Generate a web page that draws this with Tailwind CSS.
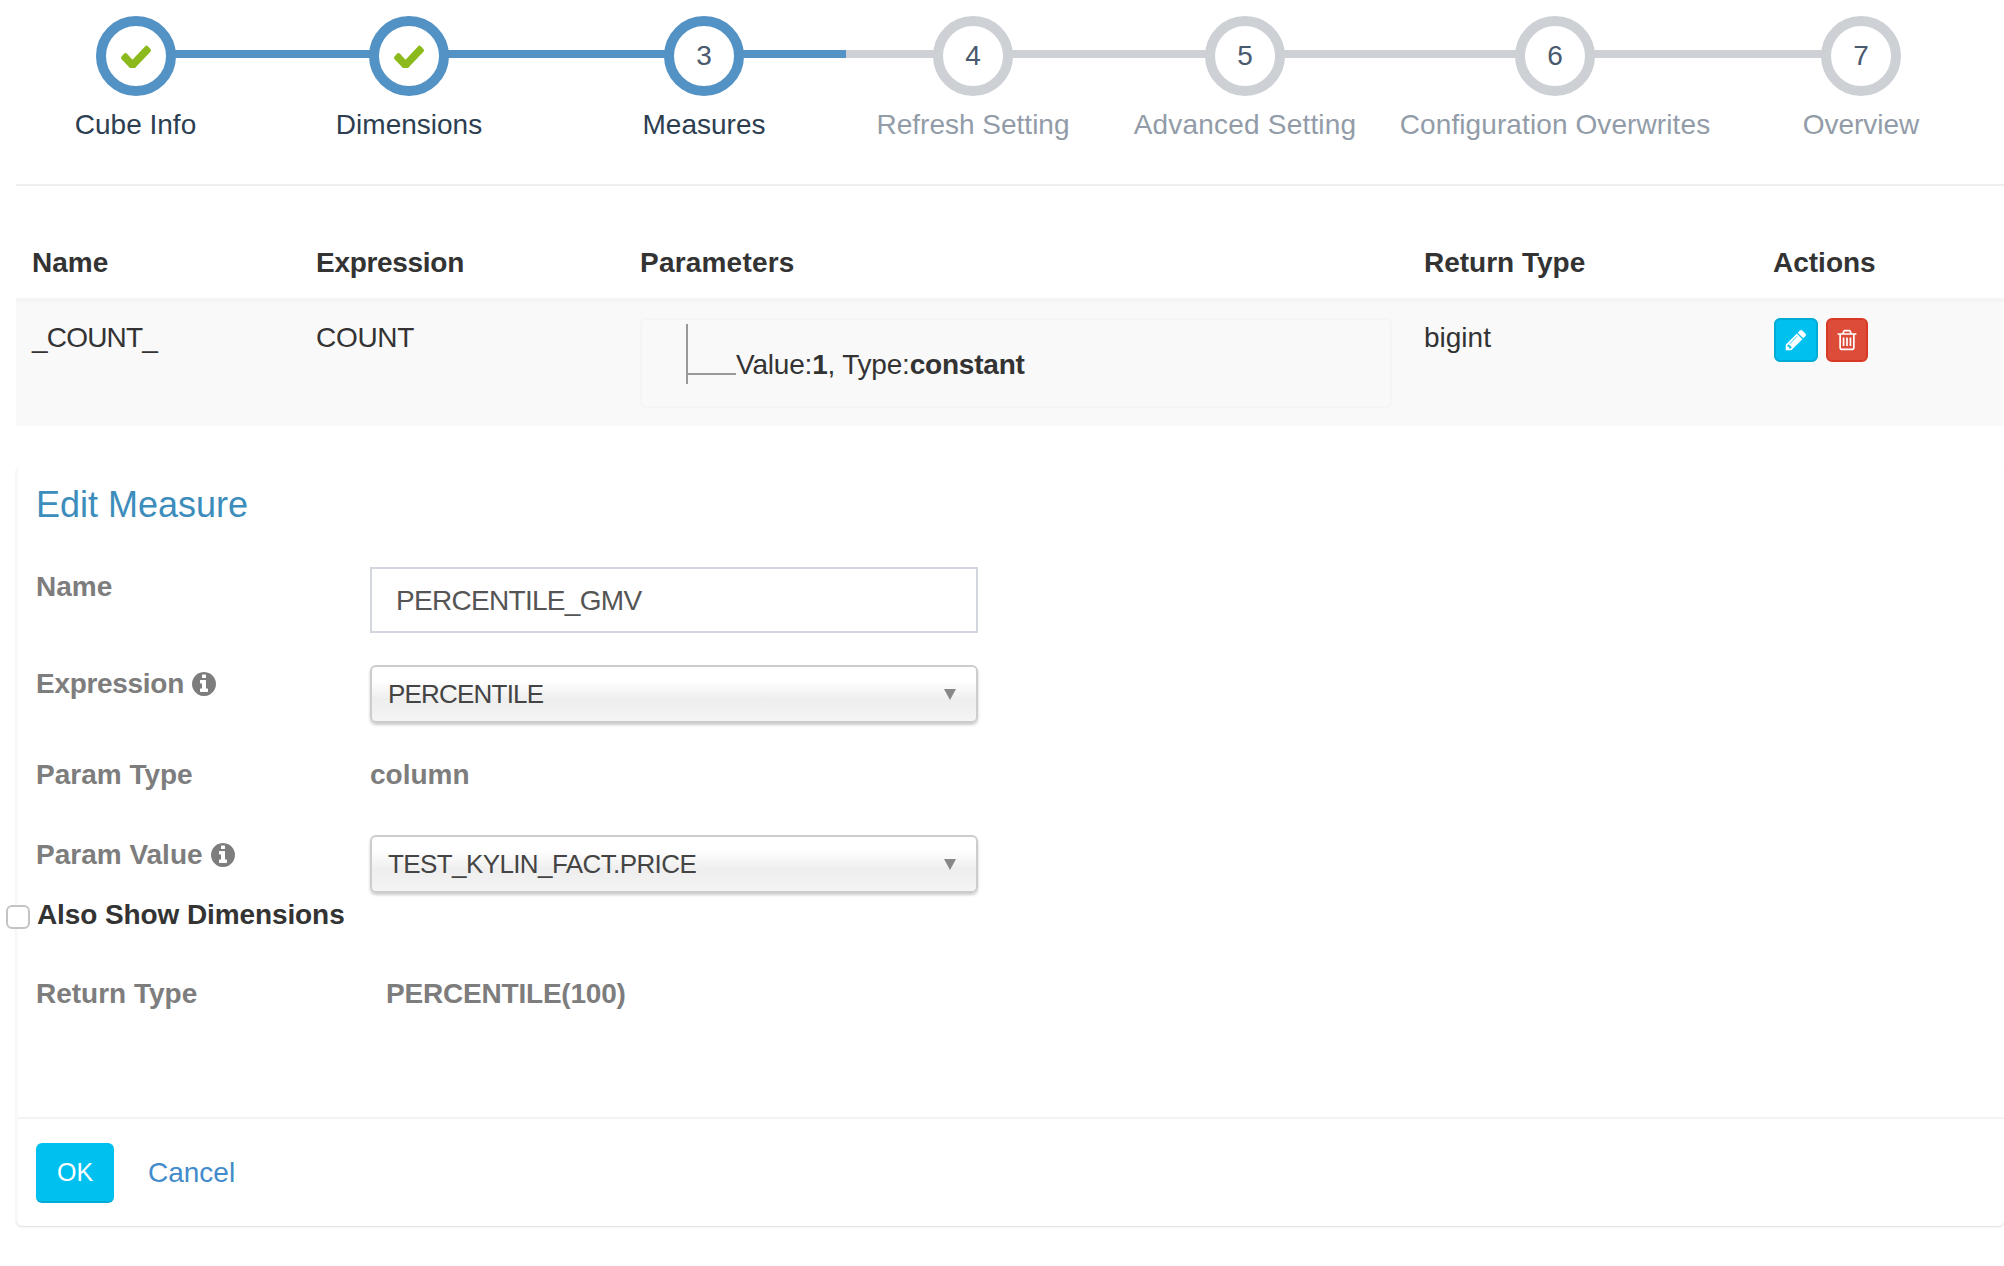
<!doctype html>
<html>
<head>
<meta charset="utf-8">
<script src="https://cdn.jsdelivr.net/npm/@tailwindcss/browser@4"></script>
</head>
<body class="bg-white font-['Liberation_Sans',Arial,sans-serif] text-[28px] leading-[40px] text-[#333] w-[2004px] h-[1266px] overflow-hidden">

<!-- Stepper -->
<div class="relative h-[186px] ml-4 border-b-2 border-[#eeeeee]">
  <div class="absolute left-[119px] top-[50px] w-[1726px] h-2 bg-[#cdd1d6]"></div>
  <div class="absolute left-[119px] top-[50px] w-[711px] h-2 bg-[#5392c4]"></div>
  <div class="relative flex pt-4 -ml-4">
    <div class="w-[271px] flex flex-col items-center text-[#2c3e50]">
      <div class="w-20 h-20 rounded-full border-[10px] border-[#5392c4] bg-white flex items-center justify-center">
        <svg class="w-[30px] h-[23px]" viewBox="121 306 1550 1120" preserveAspectRatio="none"><path fill="#8cb91c" d="M1671 566q0 40-28 68l-724 724-136 136q-28 28-68 28t-68-28l-136-136-362-362q-28-28-28-68t28-68l136-136q28-28 68-28t68 28l294 295 656-657q28-28 68-28t68 28l136 136q28 28 28 68z"/></svg>
      </div>
      <div class="mt-[9px] whitespace-nowrap">Cube Info</div>
    </div>
    <div class="w-[276px] flex flex-col items-center text-[#2c3e50]">
      <div class="w-20 h-20 rounded-full border-[10px] border-[#5392c4] bg-white flex items-center justify-center">
        <svg class="w-[30px] h-[23px]" viewBox="121 306 1550 1120" preserveAspectRatio="none"><path fill="#8cb91c" d="M1671 566q0 40-28 68l-724 724-136 136q-28 28-68 28t-68-28l-136-136-362-362q-28-28-28-68t28-68l136-136q28-28 68-28t68 28l294 295 656-657q28-28 68-28t68 28l136 136q28 28 28 68z"/></svg>
      </div>
      <div class="mt-[9px] whitespace-nowrap">Dimensions</div>
    </div>
    <div class="w-[314px] flex flex-col items-center text-[#2c3e50]">
      <div class="w-20 h-20 rounded-full border-[10px] border-[#5392c4] bg-white flex items-center justify-center text-[#4a5a6e]">3</div>
      <div class="mt-[9px] whitespace-nowrap">Measures</div>
    </div>
    <div class="w-[224px] flex flex-col items-center text-[#929ca8]">
      <div class="w-20 h-20 rounded-full border-[10px] border-[#cdd1d6] bg-white flex items-center justify-center text-[#4a5a6e]">4</div>
      <div class="mt-[9px] whitespace-nowrap">Refresh Setting</div>
    </div>
    <div class="w-[320px] flex flex-col items-center text-[#929ca8]">
      <div class="w-20 h-20 rounded-full border-[10px] border-[#cdd1d6] bg-white flex items-center justify-center text-[#4a5a6e]">5</div>
      <div class="mt-[9px] whitespace-nowrap tracking-[0.2px]">Advanced Setting</div>
    </div>
    <div class="w-[300px] flex flex-col items-center text-[#929ca8]">
      <div class="w-20 h-20 rounded-full border-[10px] border-[#cdd1d6] bg-white flex items-center justify-center text-[#4a5a6e]">6</div>
      <div class="mt-[9px] whitespace-nowrap tracking-[0.1px]">Configuration Overwrites</div>
    </div>
    <div class="w-[312px] flex flex-col items-center text-[#929ca8] -mr-[40px]">
      <div class="w-20 h-20 rounded-full border-[10px] border-[#cdd1d6] bg-white flex items-center justify-center text-[#4a5a6e]">7</div>
      <div class="mt-[9px] whitespace-nowrap">Overview</div>
    </div>
  </div>
</div>

<!-- Measures table -->
<div class="ml-4">
  <div class="grid grid-cols-[284px_324px_784px_349px_1fr] h-[112px] items-start pt-[57px] font-bold text-[#333]">
    <div class="pl-4">Name</div>
    <div class="pl-4 tracking-[-0.3px]">Expression</div>
    <div class="pl-4 tracking-[0.2px]">Parameters</div>
    <div class="pl-4">Return Type</div>
    <div class="pl-4">Actions</div>
  </div>
  <div class="grid grid-cols-[284px_324px_784px_349px_1fr] h-[128px] bg-[#f9f9f9] border-t-4 border-[#f4f4f4] pt-4">
    <div class="pl-4 tracking-[-0.8px]">_COUNT_</div>
    <div class="pl-4 tracking-[-0.3px]">COUNT</div>
    <div class="pl-4 pr-4">
      <div class="h-[90px] rounded-md border-2 border-[#f5f5f5] pt-1 pl-[44px]">
        <div class="flex h-[60px] border-l-2 border-[#999] relative">
          <div class="w-[48px] h-[51px] border-b-2 border-[#999]"></div>
          <div class="mt-[21px] whitespace-nowrap tracking-[-0.2px]">Value:<b>1</b>, Type:<b>constant</b></div>
        </div>
      </div>
    </div>
    <div class="pl-4">bigint</div>
    <div class="pl-[17px] flex gap-2 items-start">
      <div class="w-11 h-11 rounded-md bg-[#00c0ef] border-2 border-[#00acd6] flex items-center justify-center">
        <svg class="w-[24px] h-[24px]" viewBox="0 0 1792 1792"><path fill="#fff" d="M491 1536l91-91-235-235-91 91v107h128v128h107zm523-928q0-22-22-22-10 0-17 7l-542 542q-7 7-7 17 0 22 22 22 10 0 17-7l542-542q7-7 7-17zm-54-192l416 416-832 832h-416v-416zm683 96q0 53-37 90l-166 166-416-416 166-165q36-38 90-38 53 0 91 38l235 234q37 39 37 91z"/></svg>
      </div>
      <div class="w-[42px] h-11 rounded-md bg-[#dd4b39] border-2 border-[#d73925] flex items-center justify-center">
        <svg class="w-[24px] h-[24px]" viewBox="0 0 1792 1792"><path fill="#fff" d="M704 736v576q0 14-9 23t-23 9h-64q-14 0-23-9t-9-23v-576q0-14 9-23t23-9h64q14 0 23 9t9 23zm256 0v576q0 14-9 23t-23 9h-64q-14 0-23-9t-9-23v-576q0-14 9-23t23-9h64q14 0 23 9t9 23zm256 0v576q0 14-9 23t-23 9h-64q-14 0-23-9t-9-23v-576q0-14 9-23t23-9h64q14 0 23 9t9 23zm128 724v-948h-896v948q0 22 7 40.5t14.5 27 10.5 8.5h832q3 0 10.5-8.5t14.5-27 7-40.5zm-672-1076h448l-48-117q-7-9-17-11h-317q-10 2-17 11zm928 32v64q0 14-9 23t-23 9h-96v948q0 83-47 143.5t-113 60.5h-832q-66 0-113-58.5t-47-141.5v-952h-96q-14 0-23-9t-9-23v-64q0-14 9-23t23-9h309l70-167q15-37 54-63t79-26h320q40 0 79 26t54 63l70 167h309q14 0 23 9t9 23z"/></svg>
      </div>
    </div>
  </div>
</div>

<!-- Edit box -->
<div class="relative ml-4 mt-10 h-[760px] rounded-md bg-white shadow-[0_1px_2px_rgba(0,0,0,0.14)] border-l-2 border-[#f9f9f9]">
  <div class="pl-[18px] pt-[17px] h-[101px] text-[36px] leading-[44px] text-[#3c8dbc]">Edit Measure</div>

  <div class="flex h-[98px] font-bold text-[#7d7d7d]">
    <div class="pl-[18px] w-[352px]">Name</div>
    <div class="w-[608px] h-[66px] border-2 border-[#d2d6de] bg-white pl-[24px] pt-[12px] font-normal text-[#555] tracking-[-0.7px]">PERCENTILE_GMV</div>
  </div>

  <div class="flex h-[86px] font-bold text-[#7d7d7d]">
    <div class="pl-[18px] w-[352px] flex items-start gap-2 -mt-px"><span class="tracking-[-0.3px]">Expression</span>
      <svg class="w-6 h-6 mt-[8px]" viewBox="128 128 1536 1536"><path fill="#7d7d7d" d="M1152 1376v-160q0-14-9-23t-23-9h-96v-512q0-14-9-23t-23-9h-320q-14 0-23 9t-9 23v160q0 14 9 23t23 9h96v320h-96q-14 0-23 9t-9 23v160q0 14 9 23t23 9h448q14 0 23-9t9-23zm-128-896v-160q0-14-9-23t-23-9h-192q-14 0-23 9t-9 23v160q0 14 9 23t23 9h192q14 0 23-9t9-23zm640 416q0 209-103 385.5t-279.5 279.5-385.5 103-385.5-103-279.5-279.5-103-385.5 103-385.5 279.5-279.5 385.5-103 385.5 103 279.5 279.5 103 385.5z"/></svg>
    </div>
    <div class="relative w-[608px] h-[58px] rounded-md border-2 border-[#cccccc] bg-[linear-gradient(to_bottom,#ffffff_0%,#ffffff_25%,#eeeeee_60%,#f4f4f4_100%)] shadow-[0_2px_3px_rgba(0,0,0,0.2)] pl-4 pt-[7px] font-normal text-[#444] text-[26px] tracking-[-0.8px]">PERCENTILE
      <span class="absolute right-[20px] top-[22px] w-0 h-0 border-l-[6px] border-r-[6px] border-t-[11px] border-l-transparent border-r-transparent border-t-[#888]"></span>
    </div>
  </div>

  <div class="flex h-[84px] font-bold text-[#7d7d7d] pt-[4px]">
    <div class="pl-[18px] w-[352px]">Param Type</div>
    <div>column</div>
  </div>

  <div class="flex h-[54px] font-bold text-[#7d7d7d]">
    <div class="pl-[18px] w-[352px] flex items-start gap-2">Param Value
      <svg class="w-6 h-6 mt-[8px]" viewBox="128 128 1536 1536"><path fill="#7d7d7d" d="M1152 1376v-160q0-14-9-23t-23-9h-96v-512q0-14-9-23t-23-9h-320q-14 0-23 9t-9 23v160q0 14 9 23t23 9h96v320h-96q-14 0-23 9t-9 23v160q0 14 9 23t23 9h448q14 0 23-9t9-23zm-128-896v-160q0-14-9-23t-23-9h-192q-14 0-23 9t-9 23v160q0 14 9 23t23 9h192q14 0 23-9t9-23zm640 416q0 209-103 385.5t-279.5 279.5-385.5 103-385.5-103-279.5-279.5-103-385.5 103-385.5 279.5-279.5 385.5-103 385.5 103 279.5 279.5 103 385.5z"/></svg>
    </div>
    <div class="relative w-[608px] h-[58px] rounded-md border-2 border-[#cccccc] bg-[linear-gradient(to_bottom,#ffffff_0%,#ffffff_25%,#eeeeee_60%,#f4f4f4_100%)] shadow-[0_2px_3px_rgba(0,0,0,0.2)] pl-4 pt-[7px] font-normal text-[#444] text-[26px] tracking-[-0.6px]">TEST_KYLIN_FACT.PRICE
      <span class="absolute right-[20px] top-[22px] w-0 h-0 border-l-[6px] border-r-[6px] border-t-[11px] border-l-transparent border-r-transparent border-t-[#888]"></span>
    </div>
  </div>

  <div class="flex h-[76px] font-bold text-[#333] items-start -ml-3 gap-[7px] pt-[6px] tracking-[-0.1px]">
    <span class="mt-[10px] w-6 h-6 rounded-md border-2 border-[#c4c4c4] bg-white"></span>
    <span>Also Show Dimensions</span>
  </div>

  <div class="flex h-[152px] font-bold text-[#7d7d7d] pt-[9px]">
    <div class="pl-[18px] w-[368px]">Return Type</div>
    <div class="tracking-[-0.2px]">PERCENTILE(100)</div>
  </div>

  <div class="border-t-2 border-[#f4f4f4] pl-[18px] pt-[24px] flex items-start gap-[34px]">
    <div class="w-[78px] h-[60px] rounded-md bg-[#00c0ef] border-b-2 border-[#00acd6] flex items-center justify-center text-white text-[25px]">OK</div>
    <div class="pt-[10px] text-[#428bca]">Cancel</div>
  </div>
</div>

</body>
</html>
